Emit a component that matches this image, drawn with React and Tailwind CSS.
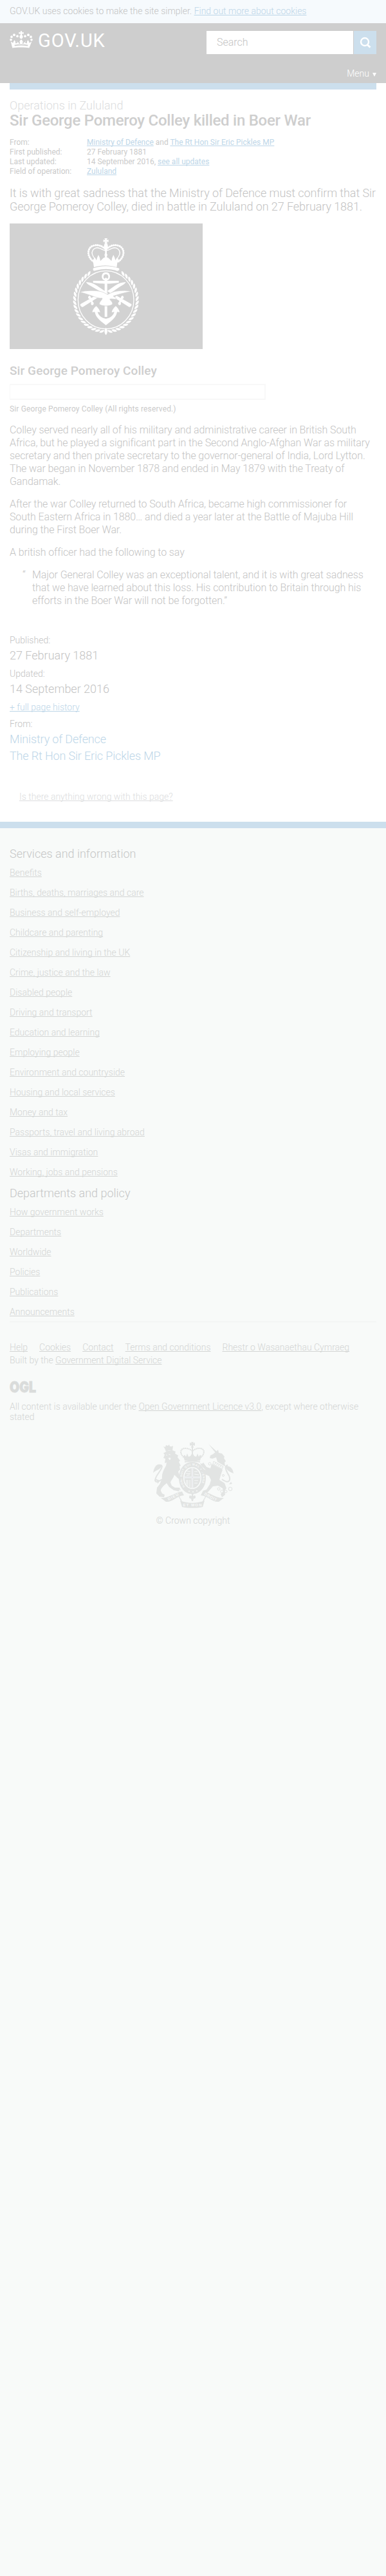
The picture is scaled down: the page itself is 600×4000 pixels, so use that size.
import React from "react";

const services = [
  "Benefits",
  "Births, deaths, marriages and care",
  "Business and self-employed",
  "Childcare and parenting",
  "Citizenship and living in the UK",
  "Crime, justice and the law",
  "Disabled people",
  "Driving and transport",
  "Education and learning",
  "Employing people",
  "Environment and countryside",
  "Housing and local services",
  "Money and tax",
  "Passports, travel and living abroad",
  "Visas and immigration",
  "Working, jobs and pensions",
];

const departments = [
  "How government works",
  "Departments",
  "Worldwide",
  "Policies",
  "Publications",
  "Announcements",
];

const linkLine = "underline underline-offset-1 decoration-1 [text-decoration-skip-ink:none]";

function Link({ children, className = "text-[#bdd6e8]" }) {
  return (
    <a href="#" className={`${linkLine} ${className}`}>
      {children}
    </a>
  );
}

function CrownLogo() {
  const dots = [
    [6, 41, 5.5], [9, 27, 5.5], [21, 18, 6], [36, 24, 5.5],
    [102, 41, 5.5], [99, 27, 5.5], [87, 18, 6], [72, 24, 5.5],
  ];
  return (
    <svg className="h-[27px] w-9" viewBox="0 0 108 80" fill="#fff">
      {dots.map(([x, y, r]) => (
        <circle key={`${x}-${y}`} cx={x} cy={y} r={r} />
      ))}
      <path d="M50 0h8l-1 7 8-2v9l-8-2 1 8c4 2 5 6 3 10l-4 6h-6l-4-6c-2-4-1-8 3-10l1-8-8 2V5l8 2z" />
      <path
        fillRule="evenodd"
        d="M5 49l11 7c1-6 3-10 7-14 4 5 5 9 4 15 5 1 8-1 9-5-3-1-3-6 0-7l-1 7 7 1c-1 6 2 8 7 6l-3-9 5-9h6l5 9-3 9c5 2 8 0 7-6l7-1-1-7c3 1 3 6 0 7 1 4 4 6 9 5-1-6 0-10 4-15 4 4 6 8 7 14l11-7-12 30c-20-4-58-4-78 0zM22 65c20-4 44-4 64 0l-2 5c-20-4-40-4-60 0z"
      />
    </svg>
  );
}

function Leaf({ x, y, angle }) {
  return (
    <path
      d="M-14 0C-8-8 4-8 13-1C7 6-6 6-14 0Z"
      transform={`translate(${x} ${y}) rotate(${angle})`}
    />
  );
}

function DefenceCrest() {
  const leaves = [];
  for (let i = 0; i < 19; i++) {
    const deg = 33 + i * 7.75;
    const a = (deg * Math.PI) / 180;
    const dx = 145 * Math.sin(a);
    const y = 303 - 146 * Math.cos(a);
    leaves.push(<Leaf key={`r${i}`} x={194 + dx} y={y} angle={deg + 30} />);
    leaves.push(
      <g key={`l${i}`} transform="translate(388 0) scale(-1 1)">
        <Leaf x={194 + dx} y={y} angle={deg + 30} />
      </g>
    );
  }
  return (
    <svg className="h-[195px] w-[300px]" viewBox="-255 -54 900 585" fill="#fff">
      {leaves}
      <path d="M194 431c9 12 9 23 0 35-9-12-9-23 0-35Z" />
      <ellipse cx="194" cy="302" rx="130" ry="135" fill="none" stroke="#fff" strokeWidth="4" />

      <path d="M187 15h14l-4 9 9-3v12l-9-3 4 9h-14l4-9-9 3V21l9 3z" />
      <ellipse cx="194" cy="51" rx="9" ry="12" />
      <path d="M190 60h8v62h-8z" />
      <path
        d="M137 124C103 101 105 57 137 49c23-6 39 2 57 18 18-16 34-24 57-18 32 8 34 52 0 75"
        fill="none"
        stroke="#fff"
        strokeWidth="10"
        strokeLinecap="round"
        strokeDasharray="0 9.5"
      />
      <path
        d="M146 113C111 80 139 50 165 62c11 4 19 10 29 10s18-6 29-10c26-12 54 18 19 51"
        fill="none"
        stroke="#fff"
        strokeWidth="4"
      />
      <path d="M133 118l8-14 9 14 3-12 6-14 6 14 3 15 13-13 5-4h16l5 4 13 13 3-15 6-14 6 14 3 12 9-14 8 14-8 12-3 20c-35-11-71-11-106 0l-3-20z" />
      <path d="M187 92l7-14 7 14-3 10h-8z" />
      <path d="M137 154c38-12 76-12 114 0l5 1v8c-6 6-12 4-17 1-29-8-61-8-90 0-6 3-12 4-15-1v-8z" />

      <path
        fillRule="evenodd"
        d="M194 173c25 0 24 35 6 38v4h-12v-4c-18-3-19-38 6-38Zm0 9c-13 0-14 19-6 21l6-5 6 5c8-2 7-21-6-21Z"
      />
      <path d="M134 213h120v9c-18 2-34 5-60 5s-44-3-60-5zM188 225h12v41h-12zM188 331h12v50h-12z" />
      <path d="M148 331c10 9 15 15 19 29l-12-2c4 16 16 28 39 32 23-4 35-16 39-32l-12 2c4-14 9-20 19-29 10 9 15 17 18 28l-12-1c-4 24-20 38-52 62-32-24-48-38-52-62l-12 1c3-11 8-19 18-28Z" />
      <path d="M101 219c17 1 32 5 48 15l55 37-10 7-66-38c-13-7-22-12-27-21ZM287 219c-17 1-32 5-48 15l-39 27 15 10 45-31c13-7 22-12 27-21Z" />
      <path d="M75 322l69-39 12 8-70 44c-5 2-14-7-11-13ZM313 322l-69-39-12 8 70 44c5 2 14-7 11-13Z" />
      <path d="M111 291c0-9 9-12 12-3l10 23c8 6 3 17-5 15-5-2-4-7-3-11l-7-18c-3 0-7-1-7-6ZM277 291c0-9-9-12-12-3l-10 23c-8 6-3 17 5 15 5-2 4-7 3-11l7-18c3 0 7-1 7-6Z" />
      <path
        d="M73 266c24-9 72-9 98-3 13 4 22 10 31 14 14-7 27-15 44-16 23-4 44-3 69 1-31 5-58 13-87 22l15 12-4 3c-11 0-18-3-27-1 3 9 12 10 13 23-8 12-53 12-62 0 1-13 14-18 14-27-27 2-49-15-104-28Z"
        stroke="#d2d2d2"
        strokeWidth="2"
      />
    </svg>
  );
}

function RoyalArms() {
  return (
    <svg className="h-[103px] w-[125px]" viewBox="0 0 125 103" fill="#e2e4e3">
      <path d="M59 0h4l-1 2 3-1v5l-3-1 1 4h-4l1-4-3 1V1l3 1z" />
      <path
        d="M49 25C39 17 43 9 51 10c5 0 8 3 10 4 2-1 5-4 10-4 8-1 12 7 2 15"
        fill="none"
        stroke="#e2e4e3"
        strokeWidth="2.4"
        strokeLinecap="round"
        strokeDasharray="0 2.7"
      />
      <path d="M60 8h2v12h-2zM47 22l2-2 2 3 2-5 2 5 3-1 3-5 3 5 3 1 2-5 2 5 2-3 2 2-2 7H49zM49 30c8-2 16-2 24 0v2c-8-2-16-2-24 0z" />

      <path fillRule="evenodd" d="M61 31c12 0 21 11 21 25S73 81 61 81 40 70 40 56s9-25 21-25Zm0 8c-8 0-14 7-14 17s6 17 14 17 14-7 14-17-6-17-14-17Z" />
      <ellipse cx="61" cy="56" rx="12.5" ry="15.5" />
      <path d="M61 40v32M48 55h26" stroke="#f8faf9" strokeWidth="2.4" />
      <path d="M61 40v32M48 55h26" stroke="#e2e3e8" strokeWidth="1" />
      <path d="M52 45l6 1M51 49l7 0M52 52l5-1M64 46l5 0M64 50l7 1M64 60l6 0M64 64l5 0M52 59v7M54 59v9M57 59v11" stroke="#f8faf9" strokeWidth="1" />
      <path id="garter" d="M50 70A16 19.500 0 1 1 72 70" fill="none" />
      <text fill="#f8faf9" className="font-['Liberation_Sans'] text-[4.5px] font-bold">
        <textPath href="#garter" textLength="78" startOffset="1">HONI SOIT QUI MAL Y PENSE</textPath>
      </text>
      <circle cx="56" cy="76.500" r="1" fill="#f8faf9" />
      <circle cx="62" cy="77.500" r="1" fill="#f8faf9" />
      <circle cx="68" cy="76" r="1" fill="#f8faf9" />

      <path d="M18 10l-2-3 3 1 1-3 3 1 2-2 1 3 3 0 2-1-1 8c-3-1-7-1-10 1z" />
      <path d="M17 17l5-3 8-1 5 2-1 3 5 3-1 3 4 5-2 2 3 6-2 1 1 5-3 3 2 6 3 4-1 4-5-4-5-5c-1 5-5 8-6 12l2 5 5 3 7 0 2 4-3-1 1 3-9-2-7-5-4-6c-4 4-9 7-9 12l2 4 4 2-1 4-7-1-5-5 1-9 4-5 4-9c-1-7 2-13 6-20l1-5-3 1 1-7-3-1 2-5-2-3z" />
      <path d="M24 19l3 1M20 20l2 1M24 25l3 0-1 3z" stroke="#f8faf9" fill="#f8faf9" strokeWidth=".8" />
      <path d="M14 58C1 67 1 59 8 49c7-10 8-13 1-13" fill="none" stroke="#e2e4e3" strokeWidth="2" />
      <path d="M14 36C6 32 2 38 0 48c4-4 8-4 12-8ZM3 57l-1 4 4-1 1 5 4-5z" />

      <path d="M86 3l13 12-2 2zM98 15l3-3 1 5 5 1 4 5-1 2 3 5-2 2 1 6-12-7-2-7-6 2-4-1 1-4 4-2z" />
      <path d="M94 30l15 8-2 4-14-8z" fill="none" stroke="#e2e4e3" strokeWidth="1" />
      <path d="M96 33l11 6" stroke="#e2e4e3" strokeWidth="2" strokeDasharray="1.500 1.500" />
      <path d="M91 34l17 9-3 9-2 7 8 5 3 8-3 4 1 6-5 4-2-5 4-4-1-5-7-4-8 1-9 10-5 0-2-3 6-2 5-8 2-7-3-6-7-3-7-6 3-1-2-3 8 4-7-7-2-4 3 1 2-2 5 7 6 2z" />
      <circle cx="88" cy="34" r="2" fill="none" stroke="#e2e4e3" />
      <path d="M107 58c12 9 15 0 9-9-5-9-4-12 0-13" fill="none" stroke="#e2e4e3" strokeWidth="2" />
      <path d="M112 38c8-2 12 4 13 11-6-3-9-3-13-11ZM118 66l3-4 2 3z" />
      <g fill="none" stroke="#e2e4e3">
        <circle cx="102" cy="73" r="2" />
        <circle cx="107" cy="77" r="2.200" />
        <circle cx="113" cy="77" r="2" />
        <circle cx="120" cy="73" r="2.800" />
        <circle cx="109" cy="52" r="1.500" />
      </g>

      <path d="M12 87c12 1 22-9 33-10l3 6c-10 0-18 11-28 10zM110 87c-12 1-22-9-33-10l-3 6c10 0 18 11 28 10z" />
      <path d="M41 83c-2 6 4 4 3 12M81 83c2 6-4 4-3 12" fill="none" stroke="#e2e4e3" strokeWidth="1.300" />
      <path d="M42 91c12 5 26 5 38 0l-3 10c-10 2-22 2-32 0z" />
      <path d="M60 79h3l-1 5 3-1c2 3 1 5-2 5l-1 4h-2l-1-4c-3 0-4-2-2-5l3 1z" />
      <g fill="#f8faf9" className="font-['Liberation_Sans'] text-[6px] font-bold">
        <text x="24" y="91" transform="rotate(-27 24 91)" textLength="18">DIEU</text>
        <text x="46.500" y="100" textLength="29">ET MON</text>
        <text x="79" y="82" transform="rotate(29 79 82)" textLength="21">DROIT</text>
      </g>
    </svg>
  );
}

function FooterLinks({ items }) {
  return (
    <ul className="-mb-px pt-px">
      {items.map((t) => (
        <li key={t} className="h-[31px] text-[14px] leading-[31px]">
          <Link className="text-[#d3d5d4]">{t}</Link>
        </li>
      ))}
    </ul>
  );
}

export default function App() {
  return (
    <div className="flex min-h-[4000px] w-[600px] flex-col bg-white font-['Roboto',sans-serif] font-light text-[#c3c3c3]">
      <div className="h-9 whitespace-nowrap bg-[#f6fafd] px-[15px] text-[14px] leading-[35px]">
        GOV.UK uses cookies to make the site simpler. <Link>Find out more about cookies</Link>
      </div>

      <header className="flex h-[93px] flex-col justify-between bg-[#cecece] px-[15px] pt-3 text-white">
        <div className="flex items-start justify-between">
          <div className="flex gap-[8px]">
            <CrownLogo />
            <span className="text-[29px] font-normal leading-[30px] tracking-[0.9px]">GOV.UK</span>
          </div>
          <div className="flex h-9 gap-px">
            <div className="w-[228px] bg-white pl-4 text-[16px] leading-9 text-[#c3c3c3]">Search</div>
            <button className="flex w-[35px] items-center justify-center bg-[#ccdfed]">
              <svg className="h-[18px] w-[18px]" viewBox="0 0 18 18" fill="none" stroke="#fff" strokeWidth="2.4">
                <circle cx="8" cy="8" r="6" />
                <path d="M12 12.500l4.500 4" strokeWidth="3" />
              </svg>
            </button>
          </div>
        </div>
        <div className="flex h-[26px] items-center justify-end gap-[5px] text-[14px] leading-5">
          <span className="-mt-[4px]">Menu</span>
          <svg className="h-[6px] w-[6px]" viewBox="0 0 6 6" fill="#fff">
            <path d="M0 0h6L3 6z" />
          </svg>
        </div>
      </header>
      <div className="mx-[15px] h-[10px] shrink-0 bg-[#ccdfed]" />

      <main className="px-[15px] pt-[13px]">
        <p className="text-[18px] leading-6 text-[#dcddde]">Operations in Zululand</p>
        <h1 className="whitespace-nowrap text-[24px] font-medium leading-[22px] tracking-[-0.26px] text-[#cecece]">
          Sir George Pomeroy Colley killed in Boer War
        </h1>

        <dl className="mt-4 grid grid-cols-[120px_1fr] text-[12px] leading-[15px] font-normal text-[#cacaca]">
          <dt>From:</dt>
          <dd>
            <Link>Ministry of Defence</Link> and <Link>The Rt Hon Sir Eric Pickles MP</Link>
          </dd>
          <dt>First published:</dt>
          <dd>27 February 1881</dd>
          <dt>Last updated:</dt>
          <dd>
            14 September 2016, <Link>see all updates</Link>
          </dd>
          <dt>Field of operation:</dt>
          <dd>
            <Link>Zululand</Link>
          </dd>
        </dl>

        <p className="mt-[15px] whitespace-nowrap text-[18px] leading-[21px] tracking-[-0.08px]">
          It is with great sadness that the Ministry of Defence must confirm that Sir
          <br />
          George Pomeroy Colley, died in battle in Zululand on 27 February 1881.
        </p>

        <div className="mt-4 h-[195px] w-[300px] bg-[#d2d2d2]">
          <DefenceCrest />
        </div>

        <h2 className="mt-[22px] text-[19px] font-medium leading-6 tracking-[0.08px] text-[#cecece]">
          Sir George Pomeroy Colley
        </h2>
        <div className="mt-2 h-[25px] w-[398px] border-2 border-l border-[#f8f8f8]" />
        <p className="mt-[7px] text-[12px] font-normal leading-[15px] tracking-[0.14px] text-[#cacaca]">
          Sir George Pomeroy Colley (All rights reserved.)
        </p>

        <div className="mt-[15px] space-y-[15px] whitespace-nowrap text-[16px] leading-5 tracking-[-0.11px]">
          <p>
            Colley served nearly all of his military and administrative career in British South
            <br />
            Africa, but he played a significant part in the Second Anglo-Afghan War as military
            <br />
            secretary and then private secretary to the governor-general of India, Lord Lytton.
            <br />
            The war began in November 1878 and ended in May 1879 with the Treaty of
            <br />
            Gandamak.
          </p>
          <p>
            After the war Colley returned to South Africa, became high commissioner for
            <br />
            South Eastern Africa in 1880… and died a year later at the Battle of Majuba Hill
            <br />
            during the First Boer War.
          </p>
          <p>A british officer had the following to say</p>
          <blockquote className="flex pl-5">
            <span className="w-[15px]">“</span>
            <p>
              Major General Colley was an exceptional talent, and it is with great sadness
              <br />
              that we have learned about this loss. His contribution to Britain through his
              <br />
              efforts in the Boer War will not be forgotten.”
            </p>
          </blockquote>
        </div>

        <dl className="mt-[38px] text-[14px] leading-[26px]">
          <dt>Published:</dt>
          <dd className="pb-1 text-[18px] leading-[22px]">27 February 1881</dd>
          <dt>Updated:</dt>
          <dd className="pb-1 text-[18px] leading-[22px]">14 September 2016</dd>
          <dd>
            <Link>+ full page history</Link>
          </dd>
          <dt>From:</dt>
          <dd className="pb-1 text-[18px] leading-[22px] tracking-[-0.15px] text-[#bdd6e8]">Ministry of Defence</dd>
          <dd className="pb-1 text-[18px] leading-[22px] tracking-[-0.15px] text-[#bdd6e8]">The Rt Hon Sir Eric Pickles MP</dd>
        </dl>

        <p className="mt-[38px] pl-[15px] text-[14px] leading-5">
          <Link className="text-[#dcddde]">Is there anything wrong with this page?</Link>
        </p>
      </main>

      <footer className="mt-[29px] grow border-t-[10px] border-[#ccdfed] bg-[#f8faf9] px-[15px] pt-[27px] text-[14px] text-[#d3d5d4]">
        <h2 className="text-[18px] leading-[26px] text-[#c5c6c6]">Services and information</h2>
        <FooterLinks items={services} />
        <h2 className="mt-[5px] text-[18px] leading-[26px] text-[#c5c6c6]">Departments and policy</h2>
        <FooterLinks items={departments} />
        <div className="-mt-px h-px bg-[#f0f2f1]" />

        <nav className="mt-[29px] flex gap-[18px] whitespace-nowrap leading-5">
          {["Help", "Cookies", "Contact", "Terms and conditions", "Rhestr o Wasanaethau Cymraeg"].map((t) => (
            <Link key={t} className="">
              {t}
            </Link>
          ))}
        </nav>
        <p className="leading-5">
          Built by the <Link className="">Government Digital Service</Link>
        </p>
        <svg className="mt-[23px] block h-[17px] w-[41px] overflow-visible" viewBox="0 0 41 17" fill="#dadcdb">
          <text
            x="0"
            y="16.700"
            textLength="41"
            lengthAdjust="spacingAndGlyphs"
            stroke="#dadcdb"
            strokeWidth=".8"
            className="font-['Inter'] text-[22.500px] font-black"
          >
            OGL
          </text>
        </svg>
        <p className="mt-[14px] whitespace-nowrap leading-4">
          All content is available under the <Link className="">Open Government Licence v3.0</Link>, except where otherwise
          <br />
          stated
        </p>
        <div className="mt-[31px] flex flex-col items-center">
          <RoyalArms />
          <p className="mt-[9px] leading-5">© Crown copyright</p>
        </div>
      </footer>
    </div>
  );
}
